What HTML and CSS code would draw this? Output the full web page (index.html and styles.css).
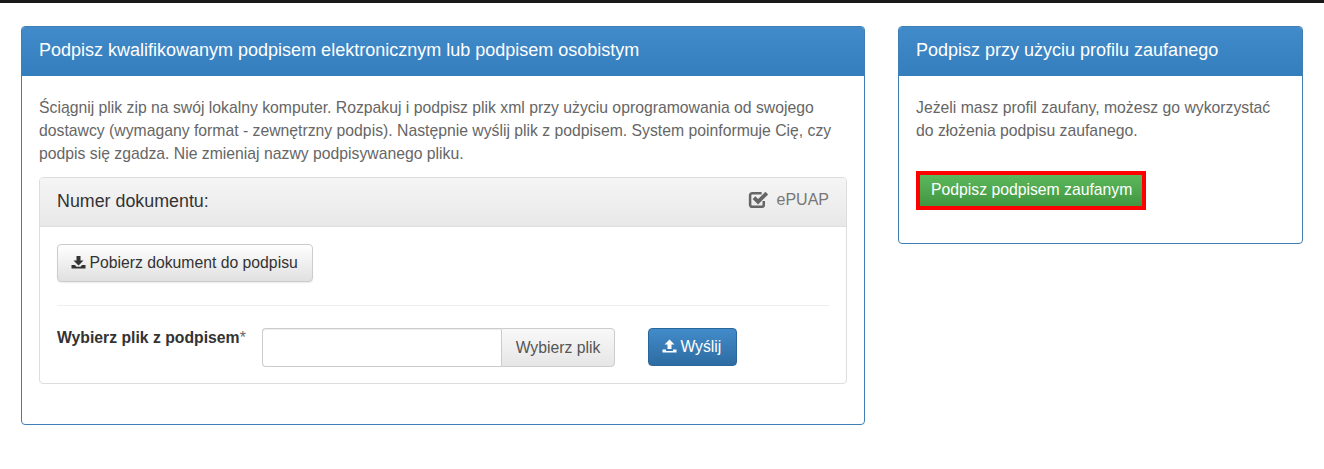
FILE: index.html
```html
<!DOCTYPE html>
<html lang="pl">
  <head>
    <meta charset="UTF-8" />
    <title>Podpisz dokument</title>
    <link rel="stylesheet" href="styles.css">
  </head>
  <body>
    <div class="topbar"></div>
    <div class="container">
      <div class="panel panel-main">
        <div class="panel-heading">Podpisz kwalifikowanym podpisem elektronicznym lub podpisem osobistym</div>
        <div class="panel-body">
          <p class="lead-text">Ściągnij plik zip na swój lokalny komputer. Rozpakuj i podpisz plik xml przy użyciu oprogramowania od swojego dostawcy (wymagany format - zewnętrzny podpis). Następnie wyślij plik z podpisem. System poinformuje Cię, czy podpis się zgadza. Nie zmieniaj nazwy podpisywanego pliku.</p>
          <div class="doc-panel">
            <div class="doc-heading">
              <span class="doc-title">Numer dokumentu:</span>
              <span class="doc-flag">
                <svg class="icon-check" viewBox="0 0 20 18" width="21" height="19">
                  <path d="M15 10.5V14a2 2 0 0 1-2 2H4a2 2 0 0 1-2-2V5a2 2 0 0 1 2-2h9" fill="none" stroke="#666" stroke-width="2.4"/>
                  <path d="M4.4 8.6 7 6l2.600 2.600L16.600 1.600l2.600 2.600-9.600 9.600z" fill="#666"/>
                </svg>
                ePUAP
              </span>
            </div>
            <div class="doc-body">
              <button class="btn btn-default">
                <svg class="icon" viewBox="0 0 14 14" width="15" height="14">
                  <path d="M5 1h4v4.500h3L7 10.500 2 5.500h3z" fill="#333"/>
                  <path d="M0 10h3.500L5 11.800h4L10.500 10H14v3.500H0z" fill="#333"/>
                </svg>
                Pobierz dokument do podpisu
              </button>
              <hr class="divider">
              <div class="upload-row">
                <label class="upload-label">Wybierz plik z podpisem<span class="req">*</span></label>
                <div class="file-group">
                  <div class="file-input"></div>
                  <div class="file-btn">Wybierz plik</div>
                </div>
                <button class="btn btn-primary">
                  <svg class="icon" viewBox="0 0 14 14" width="15" height="14">
                    <path d="M7 .5 12 5.500H9V10H5V5.500H2z" fill="#fff"/>
                    <path d="M0 10.500h3.500v1.500h7v-1.500H14v3H0z" fill="#fff"/>
                  </svg>
                  Wyślij
                </button>
              </div>
            </div>
          </div>
        </div>
      </div>
      <div class="panel panel-side">
        <div class="panel-heading">Podpisz przy użyciu profilu zaufanego</div>
        <div class="panel-body">
          <p class="lead-text">Jeżeli masz profil zaufany, możesz go wykorzystać do złożenia podpisu zaufanego.</p>
          <button class="btn btn-success">Podpisz podpisem zaufanym</button>
        </div>
      </div>
    </div>
  </body>
</html>
```

FILE: styles.css
```css
body {
  margin: 0;
  background-color: #fff;
  font-family: "Liberation Sans", Arial, sans-serif;
  font-size: 15.75px;
  line-height: 23px;
  color: #333;
}
.topbar {
  height: 3px;
  background-color: #181818;
}
.container {
  display: flex;
  align-items: flex-start;
  gap: 33px;
  padding: 23px 21px 0;
}
.panel {
  border: 1px solid #3f7fb5;
  border-radius: 4px;
  box-sizing: border-box;
  background-color: #fff;
}
.panel-main {
  width: 844px;
  height: 399px;
}
.panel-side {
  width: 405px;
  height: 218px;
}
.panel-heading {
  height: 49px;
  padding: 0 17px;
  background: linear-gradient(to bottom, #428bca 0%, #357ebd 100%);
  border-radius: 3px 3px 0 0;
  color: #fff;
  font-size: 18px;
  line-height: 47px;
}
.panel-body {
  padding: 20px 17px;
}
.lead-text {
  margin: 0;
  color: #666;
}
.doc-panel {
  margin-top: 12px;
  border: 1px solid #ddd;
  border-radius: 4px;
}
.doc-heading {
  display: flex;
  justify-content: space-between;
  align-items: center;
  height: 48px;
  padding: 0 17px;
  background: linear-gradient(to bottom, #f5f5f5 0%, #e8e8e8 100%);
  border-bottom: 1px solid #ddd;
  border-radius: 3px 3px 0 0;
}
.doc-title {
  padding-bottom: 2px;
  font-size: 17.85px;
  color: #333;
}
.doc-flag {
  display: flex;
  align-items: center;
  gap: 8px;
  padding-bottom: 5px;
  font-size: 16px;
  color: #777;
}
.doc-body {
  padding: 17px 17px 16px;
}
.btn {
  font-family: inherit;
  font-size: 15.75px;
  line-height: 20px;
  border-radius: 4px;
  padding: 8px 13px;
  cursor: pointer;
}
.icon {
  margin-right: -1px;
  vertical-align: -1px;
}
.btn-default {
  height: 38px;
  padding-right: 14px;
  color: #333;
  background: linear-gradient(to bottom, #fff 0%, #e0e0e0 100%);
  border: 1px solid #ccc;
  box-shadow: 0 1px 1px rgba(0, 0, 0, 0.08);
}
.btn-primary {
  height: 38px;
  margin-left: 33px;
  padding-right: 15px;
  color: #fff;
  background: linear-gradient(to bottom, #428bca 0%, #2d6ca2 100%);
  border: 1px solid #2b669a;
}
.btn-success {
  display: block;
  height: 39px;
  margin-top: 29px;
  padding: 0 10px 2px 11px;
  color: #fff;
  background: linear-gradient(to bottom, #5cb85c 0%, #419641 100%);
  border: 4px solid #f00;
  border-radius: 0;
}
.divider {
  margin: 23px 0 22px;
  border: 0;
  border-top: 1px solid #eee;
}
.upload-row {
  display: flex;
  align-items: flex-start;
}
.upload-label {
  width: 205px;
  margin-top: -2px;
  font-weight: bold;
}
.req {
  font-weight: normal;
  color: #666;
}
.file-group {
  display: flex;
  width: 353px;
  height: 39px;
}
.file-input {
  flex: 1;
  border: 1px solid #ccc;
  border-right: 0;
  border-radius: 4px 0 0 4px;
  box-shadow: inset 0 1px 1px rgba(0, 0, 0, 0.075);
}
.file-btn {
  width: 114px;
  box-sizing: border-box;
  text-align: center;
  line-height: 37px;
  color: #555;
  background: linear-gradient(to bottom, #f8f8f8 0%, #e6e6e6 100%);
  border: 1px solid #ccc;
  border-radius: 0 4px 4px 0;
}
```
